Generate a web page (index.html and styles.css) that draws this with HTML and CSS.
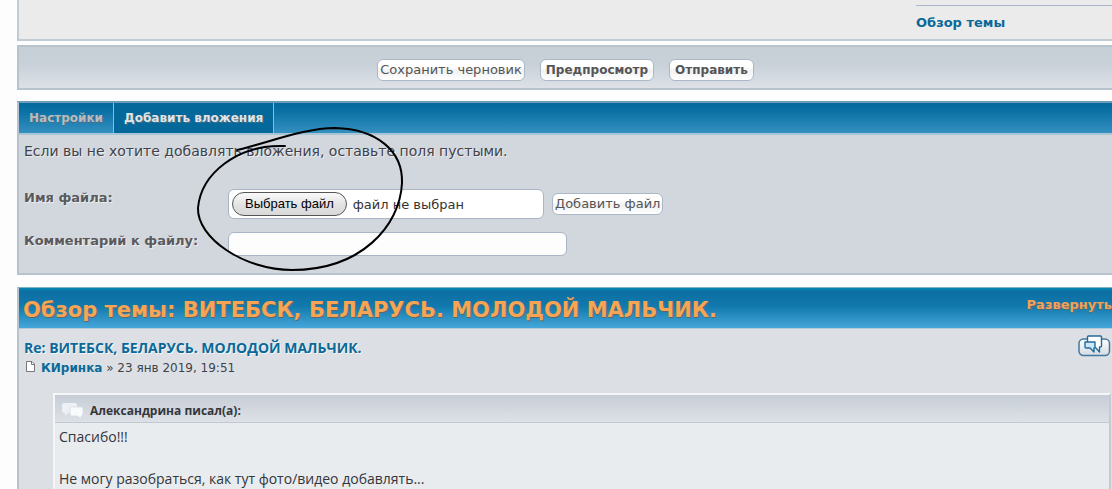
FILE: index.html
```html
<!DOCTYPE html>
<html lang="ru">
<head>
<meta charset="utf-8">
<meta name="viewport" content="width=device-width, initial-scale=1">
<title>Обзор темы</title>
<link rel="stylesheet" href="styles.css">
</head>
<body>
<main class="page">
  <section class="message-panel">
    <div class="smilies">
      <a class="review-link" href="#review">Обзор темы</a>
    </div>
  </section>

  <div class="actions">
    <button class="btn" type="button">Сохранить черновик</button>
    <button class="btn btn-strong" type="button">Предпросмотр</button>
    <button class="btn btn-strong" type="submit">Отправить</button>
  </div>

  <section class="attach">
    <nav class="tabs">
      <a class="tab" href="#options">Настройки</a>
      <a class="tab tab-active" href="#attach">Добавить вложения</a>
    </nav>
    <form class="attach-form">
      <p class="hint">Если вы не хотите добавлять вложения, оставьте поля пустыми.</p>
      <div class="field field-file">
        <label class="field-label" for="file">Имя файла:</label>
        <div class="file-box">
          <span class="file-button">Выбрать файл</span>
          <span class="file-status">файл не выбран</span>
          <input class="file-input" id="file" type="file">
        </div>
        <button class="btn" type="button">Добавить файл</button>
      </div>
      <div class="field">
        <label class="field-label" for="comment">Комментарий к файлу:</label>
        <input class="comment" id="comment" type="text">
      </div>
    </form>
    <svg class="pen-mark" width="214" height="150" viewBox="194 124 214 150" aria-hidden="true">
      <path d="M237 150C270 142 305 128 335 128C377 129 403 151 402 183C400 226 361 270 292 270C244 270 197 238 198 208C201 174 237 144 285 146"/>
    </svg>
  </section>

  <section class="review" id="review">
    <header class="review-head">
      <h2 class="review-title">Обзор темы: ВИТЕБСК, БЕЛАРУСЬ. МОЛОДОЙ МАЛЬЧИК.</h2>
      <a class="expand" href="#expand">Развернуть</a>
    </header>
    <article class="post">
      <div class="post-top">
        <h3 class="post-title"><a href="#post">Re: ВИТЕБСК, БЕЛАРУСЬ. МОЛОДОЙ МАЛЬЧИК.</a></h3>
        <button class="quote-btn" type="button" aria-label="Цитата">
          <svg width="33" height="23" viewBox="0 0 33 23">
            <defs><linearGradient id="q" x1="0" y1="0" x2="0" y2="1"><stop offset="0" stop-color="#fff"/><stop offset="1" stop-color="#d5dbe3"/></linearGradient></defs>
            <rect x="1" y="4" width="30.500" height="16.500" rx="4.500" fill="url(#q)" stroke="#4379a0" stroke-width="1.500"/>
            <path d="M9.500 7V2Q9.500 1 10.500 1H22.500Q23.500 1 23.500 2V11Q23.500 12 22.500 12H21.500V17L17.500 12.500" fill="#fff" stroke="#286a96" stroke-width="1.400" stroke-linejoin="round"/>
            <path d="M7 7H17V13H16V17L12 13H8Q7 13 7 12Z" fill="#c9e9f8" stroke="#286a96" stroke-width="1.400" stroke-linejoin="round"/>
          </svg>
        </button>
      </div>
      <p class="byline">
        <svg class="page-icon" width="9" height="11" viewBox="0 0 9 11" aria-hidden="true"><path d="M.5 .5H6L8.500 3V10.500H.5Z" fill="#fff" stroke="#777"/><path d="M5.500 .5V3.500H8.500" fill="none" stroke="#777"/></svg>
        <span><a class="author" href="#author">КИринка</a> » 23 янв 2019, 19:51</span>
      </p>
      <blockquote class="quote">
        <cite class="quote-head">
          <svg width="22" height="18" viewBox="0 0 22 18" aria-hidden="true"><path d="M2 1H13Q15 1 15 3V9Q15 11 13 11H6L3 14V11H2Q0 11 0 9V3Q0 1 2 1Z" fill="#edf0f4"/><path d="M10 5H19Q21 5 21 7V12Q21 14 19 14V17L16 14H10Q8 14 8 12V7Q8 5 10 5Z" fill="#f8fafb" stroke="#d5dae1" stroke-width=".6"/></svg>
          <span>Александрина писал(а):</span>
        </cite>
        <div class="quote-body">Спасибо!!!<br><br>Не могу разобраться, как тут фото/видео добавлять...</div>
      </blockquote>
    </article>
  </section>
</main>
</body>
</html>
```
FILE: styles.css
```css
* { box-sizing: border-box; }

body {
  margin: 0;
  background: #fdfdfd;
  color: #3f424a;
  font-family: Verdana, "DejaVu Sans", sans-serif;
  font-size: 13px;
}

a { color: #0a6998; text-decoration: none; }
p, h2, h3, blockquote { margin: 0; }

.page { padding-left: 17px; }

.message-panel {
  display: flex;
  justify-content: flex-end;
  padding-top: 5px;
  background: #ebebeb;
  border-left: 2px solid #c1cbd3;
  border-bottom: 2px solid #c1cbd3;
}

.smilies {
  width: 196px;
  border-top: 1px solid #a9b6c9;
  padding: 9px 0 8px;
  line-height: 16px;
}

.review-link { font-size: 13px; font-weight: bold; }

.actions {
  display: flex;
  justify-content: center;
  gap: 15px;
  margin-top: 4px;
  padding: 12px 0 7px;
  border: 2px solid #b8c4cd;
  border-right: 0;
  background: linear-gradient(#c6ced6, #c8d0d8 40%, #dde1e7);
}

.btn {
  height: 22px;
  padding: 0 2px;
  border: 1px solid #abb8c6;
  border-radius: 6px;
  background: linear-gradient(#fff, #fff 35%, #f0f1f2 55%, #fff);
  color: #555;
  font: 13px/20px Verdana, "DejaVu Sans", sans-serif;
  white-space: nowrap;
}

.btn-strong { padding: 0 5px; font-size: 12px; font-weight: bold; }

.attach {
  position: relative;
  margin-top: 11px;
  border: 2px solid #b8c2cf;
  border-right: 0;
  border-top-color: #6d9cb6;
  background: #d2d6dd;
}

.tabs {
  display: flex;
  height: 32px;
  border-bottom: 2px solid #a9c4d5;
  background: linear-gradient(#046a9e, #0c72a6 30%, #3490bf);
}

.tab {
  padding: 0 10px;
  border-right: 1px solid #8dbbd3;
  color: #b8bcc0;
  font-size: 12px;
  font-weight: bold;
  line-height: 30px;
  text-shadow: 1px 1px 0 #4c6f84;
}

.tab-active { background: #04689b; color: #e1e4e6; }

.attach-form {
  padding: 7px 5px 17px;
  text-shadow: 1px 1px 0 #eceef1;
}

.hint { line-height: 18px; font-size: 14px; margin-bottom: 29px; }

.field { display: flex; align-items: flex-start; }

.field-file { margin-bottom: 13px; }

.field-file .btn { margin: 4px 0 0 8px; }

.field-label {
  flex: 0 0 204px;
  color: #5a5a5d;
  font-size: 13px;
  font-weight: bold;
  line-height: 18px;
}

.file-box {
  position: relative;
  display: flex;
  align-items: center;
  flex: 0 1 316px;
  height: 30px;
  padding-left: 3px;
  border: 1px solid #a9b5c5;
  border-radius: 6px;
  background: #fff;
  text-shadow: none;
}

.file-button {
  height: 24px;
  padding: 0 12px;
  border: 1px solid #555;
  border-radius: 12px;
  background: linear-gradient(#fafafa, #e2e2e2 55%, #d9d9d9);
  color: #000;
  font: 13px/22px "Liberation Sans", Arial, sans-serif;
  white-space: nowrap;
}

.file-status { margin-left: 6px; font-size: 13px; color: #333; white-space: nowrap; }

.file-input {
  position: absolute;
  inset: 0;
  width: 100%;
  height: 100%;
  opacity: 0;
}

.comment {
  flex: 0 1 339px;
  min-width: 0;
  height: 24px;
  padding: 2px 4px;
  border: 1px solid #a9b5c5;
  border-radius: 6px;
  background: #fdfdfd;
}

.pen-mark {
  position: absolute;
  left: 175px;
  top: 21px;
  pointer-events: none;
}

.pen-mark path { fill: none; stroke: #000; stroke-width: 2; stroke-linecap: round; }

.review {
  margin-top: 12px;
  border-left: 2px solid #b8c4cd;
  border-top: 1px solid #7fb2c4;
  background: #dce0e4;
}

.review-head {
  display: flex;
  justify-content: space-between;
  height: 41px;
  padding-left: 4px;
  border-bottom: 1px solid #b2cada;
  background: linear-gradient(#0789b0, #0d6fa3 8%, #1179ad 45%, #45a6d9);
  color: #f7a555;
  text-shadow: 1px 1px 0 #5d6865;
  white-space: nowrap;
}

.review-title { font-size: 21px; line-height: 44px; }

.expand { color: #f0a35c; font-size: 13px; font-weight: bold; line-height: 34px; }

.post { padding: 6px 1px 0 5px; }

.post-top { display: flex; justify-content: space-between; }

.post-title {
  font: bold 14px/25px "Trebuchet MS", "Open Sans", sans-serif;
  text-shadow: 1px 1px 0 #f4f6f8;
}

.quote-btn { height: 24px; padding: 0; border: 0; background: none; }

.byline {
  display: flex;
  gap: 6px;
  padding-left: 2px;
  font-size: 12px;
  line-height: 17px;
}

.page-icon { margin-top: 1px; }
.author { font-weight: bold; }

.quote {
  margin: 16px 0 0 29px;
  border: 2px solid #f4f6f7;
  border-right-color: #c3cad0;
  border-bottom: 0;
  background: #e8ecef;
  font-family: "Trebuchet MS", "Open Sans", sans-serif;
  color: #33363b;
}

.quote-head {
  display: flex;
  gap: 6px;
  align-items: center;
  height: 28px;
  padding: 4px 7px 0;
  border-bottom: 1px solid #c2c9d1;
  background: linear-gradient(#c7cdd6, #dde1e7);
  font-size: 12px;
  font-style: normal;
  font-weight: bold;
}

.quote-body { padding: 3px 4px 0; font-size: 14px; line-height: 21px; }
```
